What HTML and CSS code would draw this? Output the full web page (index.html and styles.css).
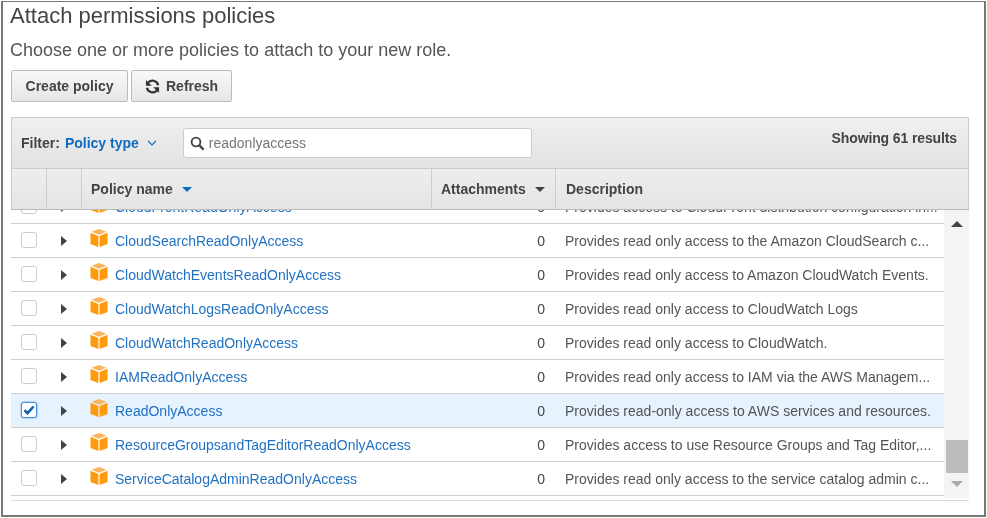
FILE: index.html
```html
<!DOCTYPE html>
<html lang="en">
<head>
  <meta charset="UTF-8">
  <title>Attach permissions policies</title>
  <link rel="stylesheet" href="styles.css">
</head>
<body>
  <svg class="defs" width="0" height="0">
    <symbol id="cube" viewBox="0 0 18 18">
      <path d="M9 0 16.500 2.800 9 5.700 1.500 2.800z" fill="#f9b35c"/>
      <path d="M.5 3.800 8.400 6.900V18L.5 15z" fill="#ff9a0d"/>
      <path d="M17.500 3.800 9.600 6.900V18l7.900-3z" fill="#ff9a0d"/>
    </symbol>
  </svg>

  <div class="frame">
    <h1>Attach permissions policies</h1>
    <p class="intro">Choose one or more policies to attach to your new role.</p>

    <div class="actions">
      <button class="btn btn-create">Create policy</button>
      <button class="btn btn-refresh">
        <svg width="15" height="15" viewBox="0 0 16 16">
          <path d="M14 6.600A6.200 6.200 0 0 0 3 4.200" fill="none" stroke="#333" stroke-width="2.400"/>
          <path d="M1 1v6.200h6.200z" fill="#333"/>
          <path d="M2 9.400a6.200 6.200 0 0 0 11 2.400" fill="none" stroke="#333" stroke-width="2.400"/>
          <path d="M15 15V8.800H8.800z" fill="#333"/>
        </svg>
        Refresh
      </button>
    </div>

    <div class="panel">
      <div class="filter-bar">
        <span class="filter-label">Filter:</span>
        <span class="filter-value">Policy type</span>
        <svg class="chevron" width="10" height="6" viewBox="0 0 10 6">
          <path d="M1 1l4 4 4-4" fill="none" stroke="#0f6cc0" stroke-width="1.200"/>
        </svg>
        <div class="search">
          <svg width="15" height="15" viewBox="0 0 15 15">
            <circle cx="6" cy="6" r="4.400" fill="none" stroke="#444" stroke-width="1.900"/>
            <path d="M9.400 9.400l4.200 4.200" stroke="#444" stroke-width="2.300"/>
          </svg>
          <span>readonlyaccess</span>
        </div>
        <span class="count">Showing 61 results</span>
      </div>

      <div class="head-row">
        <div class="col-check"></div>
        <div class="col-toggle"></div>
        <div class="col-name">Policy name <i class="sort sort-active"></i></div>
        <div class="col-attach">Attachments <i class="sort"></i></div>
        <div class="col-desc">Description</div>
      </div>

      <div class="body-wrap">
        <div class="rows">
          <div class="rows-inner">
            <div class="row">
              <span class="box"></span><i class="caret"></i>
              <svg class="cube"><use href="#cube"/></svg>
              <a class="name">CloudFrontReadOnlyAccess</a><span class="num">0</span>
              <span class="desc">Provides access to CloudFront distribution configuration in...</span>
            </div>
            <div class="row">
              <span class="box"></span><i class="caret"></i>
              <svg class="cube"><use href="#cube"/></svg>
              <a class="name">CloudSearchReadOnlyAccess</a><span class="num">0</span>
              <span class="desc">Provides read only access to the Amazon CloudSearch c...</span>
            </div>
            <div class="row">
              <span class="box"></span><i class="caret"></i>
              <svg class="cube"><use href="#cube"/></svg>
              <a class="name">CloudWatchEventsReadOnlyAccess</a><span class="num">0</span>
              <span class="desc">Provides read only access to Amazon CloudWatch Events.</span>
            </div>
            <div class="row">
              <span class="box"></span><i class="caret"></i>
              <svg class="cube"><use href="#cube"/></svg>
              <a class="name">CloudWatchLogsReadOnlyAccess</a><span class="num">0</span>
              <span class="desc">Provides read only access to CloudWatch Logs</span>
            </div>
            <div class="row">
              <span class="box"></span><i class="caret"></i>
              <svg class="cube"><use href="#cube"/></svg>
              <a class="name">CloudWatchReadOnlyAccess</a><span class="num">0</span>
              <span class="desc">Provides read only access to CloudWatch.</span>
            </div>
            <div class="row">
              <span class="box"></span><i class="caret"></i>
              <svg class="cube"><use href="#cube"/></svg>
              <a class="name">IAMReadOnlyAccess</a><span class="num">0</span>
              <span class="desc">Provides read only access to IAM via the AWS Managem...</span>
            </div>
            <div class="row row-selected">
              <span class="box box-checked">
                <svg width="12" height="10" viewBox="0 0 12 10">
                  <path d="M1.500 5.200 4.500 8.200 10.500 1.500" fill="none" stroke="#0b5fb0" stroke-width="2.600"/>
                </svg>
              </span><i class="caret"></i>
              <svg class="cube"><use href="#cube"/></svg>
              <a class="name">ReadOnlyAccess</a><span class="num">0</span>
              <span class="desc">Provides read-only access to AWS services and resources.</span>
            </div>
            <div class="row">
              <span class="box"></span><i class="caret"></i>
              <svg class="cube"><use href="#cube"/></svg>
              <a class="name">ResourceGroupsandTagEditorReadOnlyAccess</a><span class="num">0</span>
              <span class="desc">Provides access to use Resource Groups and Tag Editor,...</span>
            </div>
            <div class="row">
              <span class="box"></span><i class="caret"></i>
              <svg class="cube"><use href="#cube"/></svg>
              <a class="name">ServiceCatalogAdminReadOnlyAccess</a><span class="num">0</span>
              <span class="desc">Provides read only access to the service catalog admin c...</span>
            </div>
          </div>
        </div>
        <div class="scrollbar">
          <i class="arrow-up"></i>
          <div class="thumb"></div>
          <i class="arrow-down"></i>
        </div>
      </div>
    </div>
  </div>
</body>
</html>
```
FILE: styles.css
```css
html, body, h1, p {
  margin: 0;
  padding: 0;
}

body {
  width: 987px;
  height: 518px;
  overflow: hidden;
  background-color: #fff;
  font-family: "Liberation Sans", Arial, sans-serif;
  font-size: 14px;
  color: #444;
}

.defs {
  position: absolute;
}

.frame {
  box-sizing: border-box;
  width: 985px;
  height: 516px;
  margin: 1px 0 0 1px;
  padding: 1px 15px 0 8px;
  border: 1px solid #777;
  border-width: 1px 2px 2px 2px;
  filter: blur(0.35px);
}

h1 {
  margin-left: -1px;
  font-size: 22px;
  font-weight: normal;
  line-height: 26px;
  color: #444;
}

.intro {
  margin-top: 9px;
  margin-left: -1px;
  font-size: 18px;
  line-height: 24px;
  color: #555;
}

.actions {
  display: flex;
  gap: 3px;
  margin-top: 8px;
}

.btn {
  display: flex;
  align-items: center;
  gap: 6px;
  height: 32px;
  padding: 0 13px;
  border: 1px solid #bbb;
  border-radius: 2px;
  background: linear-gradient(#f8f8f8, #e6e6e6);
  font-family: inherit;
  font-size: 14px;
  font-weight: bold;
  color: #444;
}

.btn-create {
  width: 117px;
  justify-content: center;
}

.panel {
  margin-top: 15px;
  border-bottom: 1px solid #ddd;
}

.filter-bar {
  display: flex;
  align-items: center;
  box-sizing: border-box;
  height: 51px;
  padding: 0 11px 0 9px;
  border: 1px solid #ccc;
  border-bottom: 0;
  background: linear-gradient(#f0f0f0, #e2e2e2);
}

.filter-label {
  font-weight: bold;
  color: #444;
}

.filter-value {
  margin-left: 5px;
  font-weight: bold;
  color: #0f6cc0;
}

.chevron {
  margin-left: 8px;
}

.search {
  display: flex;
  align-items: center;
  gap: 4px;
  box-sizing: border-box;
  width: 349px;
  height: 30px;
  margin-left: 26px;
  padding-left: 6px;
  border: 1px solid #ccc;
  border-radius: 3px;
  background-color: #fff;
  color: #777;
}

.count {
  margin-left: auto;
  margin-bottom: 10px;
  font-weight: bold;
  letter-spacing: -0.12px;
  color: #444;
}

.head-row {
  display: flex;
  box-sizing: border-box;
  height: 42px;
  border: 1px solid #ccc;
  border-bottom-color: #bbb;
  background: linear-gradient(#eeeeee, #e4e4e4);
  font-weight: bold;
  line-height: 40px;
}

.head-row > div {
  box-sizing: border-box;
  border-right: 1px solid #ccc;
}

.col-check,
.col-toggle {
  width: 35px;
}

.col-name {
  width: 350px;
  padding-left: 9px;
}

.col-attach {
  width: 124px;
  padding-left: 9px;
}

.head-row .col-desc {
  flex: 1;
  padding-left: 10px;
  border-right: 0;
}

.sort {
  display: inline-block;
  margin-left: 5px;
  vertical-align: 2px;
  border-top: 5px solid #444;
  border-left: 5px solid transparent;
  border-right: 5px solid transparent;
}

.sort-active {
  border-top-color: #0f6cc0;
}

.body-wrap {
  display: flex;
  height: 290px;
}

.rows {
  flex: 1;
  overflow: hidden;
}

.rows-inner {
  margin-top: -20px;
}

.row {
  display: flex;
  align-items: center;
  box-sizing: border-box;
  height: 34px;
  border-bottom: 1px solid #cfcfcf;
}

.row-selected {
  background-color: #e6f2fd;
}

.box {
  display: flex;
  align-items: center;
  justify-content: center;
  box-sizing: border-box;
  flex: none;
  width: 16px;
  height: 16px;
  margin: -2px 0 0 10px;
  border: 1px solid #cccccc;
  border-radius: 3px;
  background-color: #fff;
}

.box-checked {
  border-color: #4a8fdc;
  box-shadow: 0 0 2px #4a8fdc;
}

.caret {
  flex: none;
  margin-left: 24px;
  border-left: 6px solid #444;
  border-top: 5px solid transparent;
  border-bottom: 5px solid transparent;
}

.cube {
  flex: none;
  width: 18px;
  height: 18px;
  margin: -5px 0 0 23px;
}

.name {
  flex: none;
  width: 408px;
  margin-left: 7px;
  color: #2272c3;
}

.num {
  flex: none;
  width: 22px;
  text-align: right;
  color: #444;
}

.desc {
  margin-left: 20px;
  white-space: nowrap;
  color: #555;
}

.scrollbar {
  display: flex;
  flex-direction: column;
  align-items: center;
  box-sizing: border-box;
  flex: none;
  width: 25px;
  height: 288px;
  padding-top: 11px;
  background-color: #f4f4f4;
}

.arrow-up {
  border-bottom: 6px solid #444;
  border-left: 6px solid transparent;
  border-right: 6px solid transparent;
}

.thumb {
  width: 22px;
  height: 33px;
  margin-top: 213px;
  background-color: #bcbcbc;
}

.arrow-down {
  margin-top: 8px;
  border-top: 6px solid #aaa;
  border-left: 6px solid transparent;
  border-right: 6px solid transparent;
}
```
